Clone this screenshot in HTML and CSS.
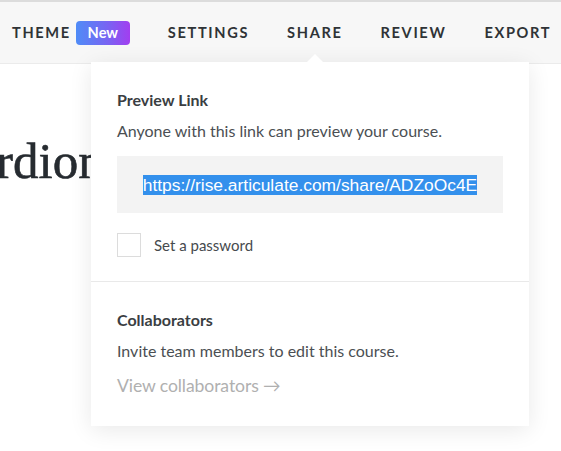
FILE: index.html
```html
<!DOCTYPE html>
<html>
<head>
<meta charset="utf-8">
<link rel="stylesheet" href="styles.css">
</head>
<body>
<header class="topbar">
  <nav class="nav">
    <span class="nav-item">Theme <span class="badge">New</span></span>
    <span class="nav-item">Settings</span>
    <span class="nav-item share">Share</span>
    <span class="nav-item">Review</span>
    <span class="nav-item">Export</span>
  </nav>
</header>
<main class="stage">
  <h1 class="title">rdion</h1>
  <div class="popup">
    <span class="caret"></span>
    <section class="section">
      <h2 class="heading">Preview Link</h2>
      <p class="desc">Anyone with this link can preview your course.</p>
      <div class="urlbox"><span class="url">https://rise.articulate.com/share/ADZoOc4E</span></div>
      <label class="check"><span class="box"></span><span>Set a password</span></label>
    </section>
    <section class="section second">
      <h2 class="heading">Collaborators</h2>
      <p class="desc">Invite team members to edit this course.</p>
      <a class="link">View collaborators <span class="arrow">→</span></a>
    </section>
  </div>
</main>
</body>
</html>
```
FILE: styles.css
```css
html, body {
  margin: 0;
  padding: 0;
  background: #fff;
  font-family: Lato, "Open Sans", sans-serif;
  overflow: hidden;
}
.topbar {
  border-top: 2px solid #dcdcdc;
  background: #f7f7f7;
  border-bottom: 1px solid #ebebeb;
  height: 61px;
}
.nav {
  display: flex;
  align-items: center;
  height: 100%;
  padding-left: 12px;
  gap: 38px;
}
.nav-item {
  display: flex;
  align-items: center;
  font-size: 14.6px;
  font-weight: 700;
  letter-spacing: 1.65px;
  text-transform: uppercase;
  color: #2f3336;
  white-space: nowrap;
}
.badge {
  display: inline-flex;
  align-items: center;
  justify-content: center;
  margin-left: 5px;
  width: 54px;
  height: 24px;
  border-radius: 4px;
  background: linear-gradient(90deg, #4f8cf7 0%, #7a63f2 60%, #a23ef0 100%);
  color: #fff;
  font-size: 14.6px;
  letter-spacing: 0;
  text-transform: none;
}
.stage {
  position: relative;
  height: 388px;
}
.title {
  margin: 0;
  padding-top: 72px;
  margin-left: -4px;
  font-family: "Liberation Serif", "DejaVu Serif", serif;
  font-weight: 400;
  font-size: 51px;
  line-height: 1;
  color: #262b30;
  -webkit-text-stroke: 0.6px #262b30;
}
.popup {
  position: absolute;
  left: 91px;
  top: -2px;
  width: 438px;
  background: #fff;
  box-shadow: 0 4px 22px rgba(0, 0, 0, 0.09);
}
.caret {
  position: absolute;
  top: -8px;
  left: 216px;
  width: 0;
  height: 0;
  border-left: 8px solid transparent;
  border-right: 8px solid transparent;
  border-bottom: 8px solid #fff;
}
.section {
  padding: 28px 26px 24px;
}
.section.second {
  border-top: 1px solid #e9e9e9;
  padding-top: 28px;
  padding-bottom: 28px;
}
.heading {
  margin: 0;
  font-size: 16px;
  font-weight: 700;
  color: #3a3e42;
  line-height: 20px;
}
.desc {
  margin: 11px 0 0;
  font-size: 16px;
  color: #4b4f53;
  line-height: 20px;
}
.urlbox {
  margin-top: 15px;
  height: 57px;
  width: 386px;
  background: #f3f3f3;
  display: flex;
  align-items: center;
  justify-content: center;
}
.url {
  font-family: "Liberation Sans", Arial, sans-serif;
  font-size: 17.4px;
  line-height: 20px;
  background: #3390ec;
  color: #fff;
}
.check {
  display: flex;
  align-items: center;
  gap: 13px;
  margin-top: 20px;
  font-size: 15px;
  color: #464a4e;
}
.box {
  width: 22px;
  height: 22px;
  border: 1px solid #dcdcdc;
  background: #fff;
}
.link {
  display: block;
  margin-top: 13px;
  font-size: 17.6px;
  color: #b0b0b0;
  line-height: 24px;
  letter-spacing: -0.1px;
}
.arrow {
  font-family: Lato, "DejaVu Sans", sans-serif;
  font-size: 17.6px;
}
```
